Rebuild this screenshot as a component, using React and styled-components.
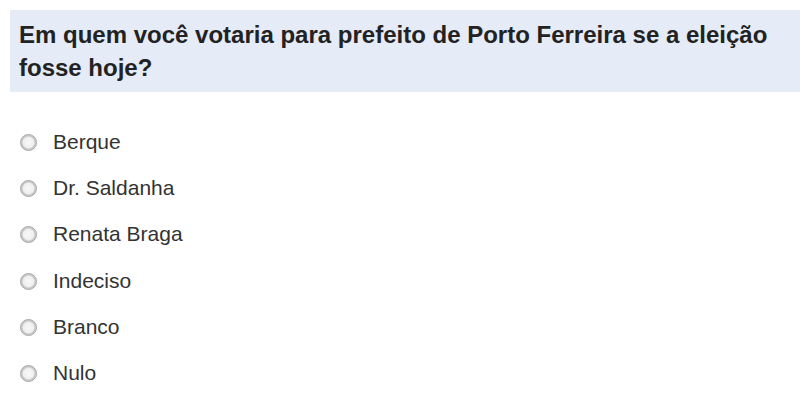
import styled, { createGlobalStyle } from "styled-components";

const GlobalStyle = createGlobalStyle`
    body {
        margin: 0;
        background: #fff;
        font-family: "Liberation Sans", Arial, sans-serif;
    }
`

const Page = styled.div`
    padding: 10px 0 0 10px;
`
const Question = styled.h1`
    margin: 0;
    background-color: #e5ebf7;
    padding: 8px 8px 8px 9px;
    font-size: 24px;
    line-height: 33px;
    font-weight: 700;
    color: #222;
`
const Options = styled.div`
    display: flex;
    flex-direction: column;
    margin-top: 27px;
`
const Option = styled.label`
    display: flex;
    align-items: center;
    height: 46.2px;
    gap: 16px;
    padding-left: 10px;
    font-size: 21px;
    color: #333;
`
const Radio = styled.span`
    width: 15px;
    height: 15px;
    margin-top: 1px;
    border-radius: 50%;
    border: 1px solid #a5a5a5;
    background: radial-gradient(circle at 50% 50%, #f8f8f8 0%, #efefef 50%, #c4c4c4 62%, #dadada 78%, #c2c2c2 100%);
    flex-shrink: 0;
`

const candidatos = ["Berque", "Dr. Saldanha", "Renata Braga", "Indeciso", "Branco", "Nulo"]

export default function App(){
    return(
        <Page>
            <GlobalStyle/>
            <Question>
                Em quem você votaria para prefeito de Porto Ferreira se a eleição fosse hoje?
            </Question>
            <Options>
                {candidatos.map((nome) => (
                    <Option key={nome}>
                        <Radio/>
                        {nome}
                    </Option>
                ))}
            </Options>
        </Page>
    )
}
